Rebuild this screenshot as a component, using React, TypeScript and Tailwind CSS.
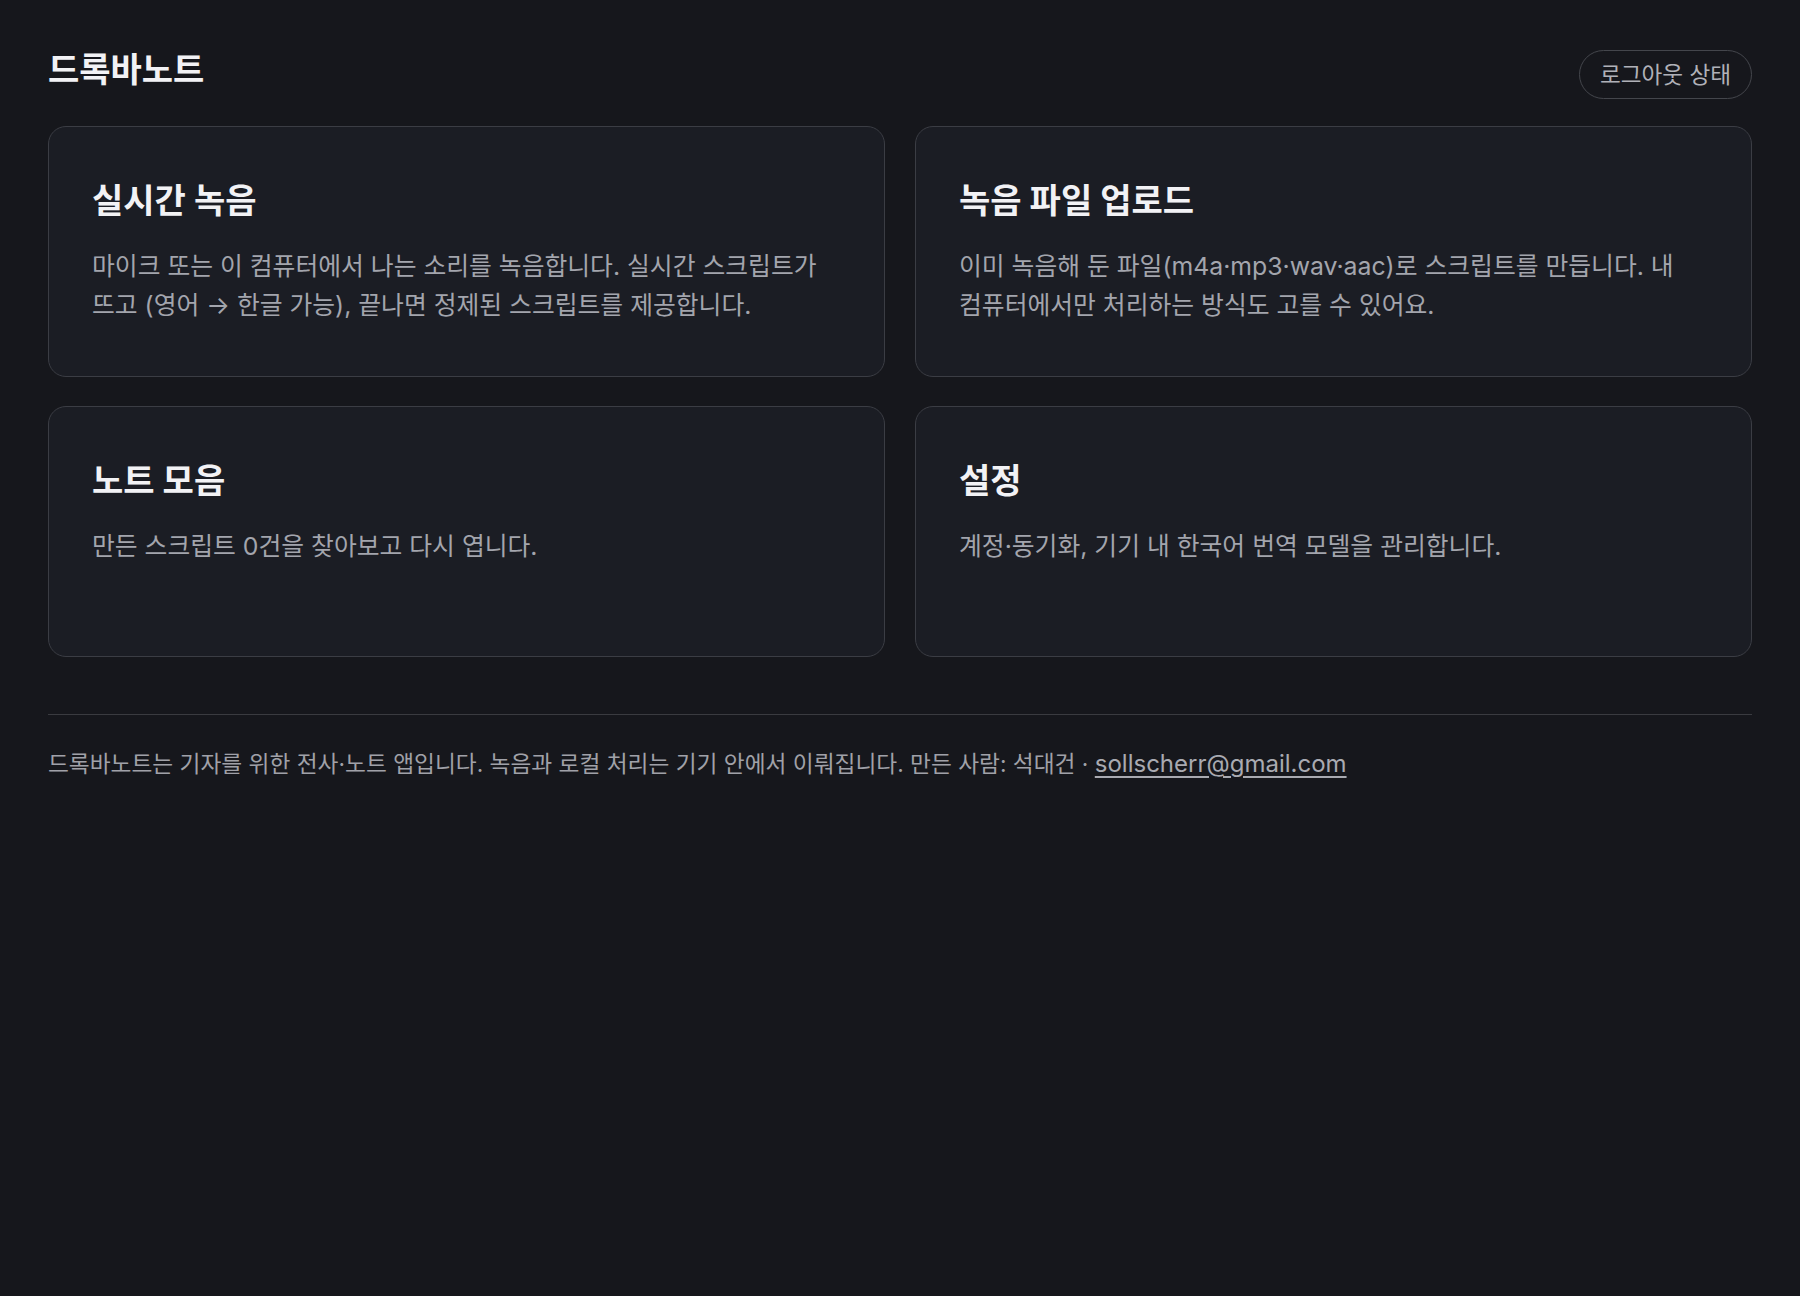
const cards = [
  {
    title: '실시간 녹음',
    body: '마이크 또는 이 컴퓨터에서 나는 소리를 녹음합니다. 실시간 스크립트가 뜨고 (영어 → 한글 가능), 끝나면 정제된 스크립트를 제공합니다.',
  },
  {
    title: '녹음 파일 업로드',
    body: '이미 녹음해 둔 파일(m4a·mp3·wav·aac)로 스크립트를 만듭니다. 내 컴퓨터에서만 처리하는 방식도 고를 수 있어요.',
  },
  {
    title: '노트 모음',
    body: '만든 스크립트 0건을 찾아보고 다시 엽니다.',
  },
  {
    title: '설정',
    body: '계정·동기화, 기기 내 한국어 번역 모델을 관리합니다.',
  },
]

function HomeCard({ title, body }: { title: string; body: string }) {
  return (
    <a
      href="#"
      className="block min-h-[251px] rounded-[18px] border-[1.5px] border-[#3b3d44] bg-[#1b1d24] px-[43px] pt-[53px] pb-[48px] transition-colors hover:border-[#55575f]"
    >
      <h2 className="text-[34px] leading-[42px] font-bold text-[#f2f2f5]">
        {title}
      </h2>
      <p className="mt-[25px] text-[24.8px] leading-[39px] break-keep text-[#a3a5ad]">
        {body}
      </p>
    </a>
  )
}

export default function App() {
  return (
    <div className="min-h-[1296px] bg-[#16171c] font-['Inter','Noto_Sans_CJK_KR',sans-serif] antialiased">
      <div className="px-[48px] pt-[50px]">
        <header className="flex items-start justify-between">
          <h1 className="mt-[3px] text-[34px] leading-[34px] font-bold text-[#f2f2f5]">
            드록바노트
          </h1>
          <button
            type="button"
            className="flex h-[49px] items-center rounded-full border-[1.5px] border-[#44464c] px-[20px] text-[22.6px] text-[#b0b1b8]"
          >
            로그아웃 상태
          </button>
        </header>

        <main className="mt-[27px] grid grid-cols-2 gap-x-[30px] gap-y-[29px]">
          {cards.map((c) => (
            <HomeCard key={c.title} title={c.title} body={c.body} />
          ))}
        </main>

        <footer className="mt-[57px] border-t-[1.5px] border-[#3a3b40] pt-[32px]">
          <p className="text-[22.7px] leading-[34px] break-keep text-[#a0a1a8]">
            드록바노트는 기자를 위한 전사·노트 앱입니다. 녹음과 로컬 처리는 기기 안에서 이뤄집니다. 만든 사람: 석대건 ·{' '}
            <a href="mailto:sollscherr@gmail.com" className="text-[24px] text-[#a9aab1] underline underline-offset-[4px]">
              sollscherr@gmail.com
            </a>
          </p>
        </footer>
      </div>
    </div>
  )
}
